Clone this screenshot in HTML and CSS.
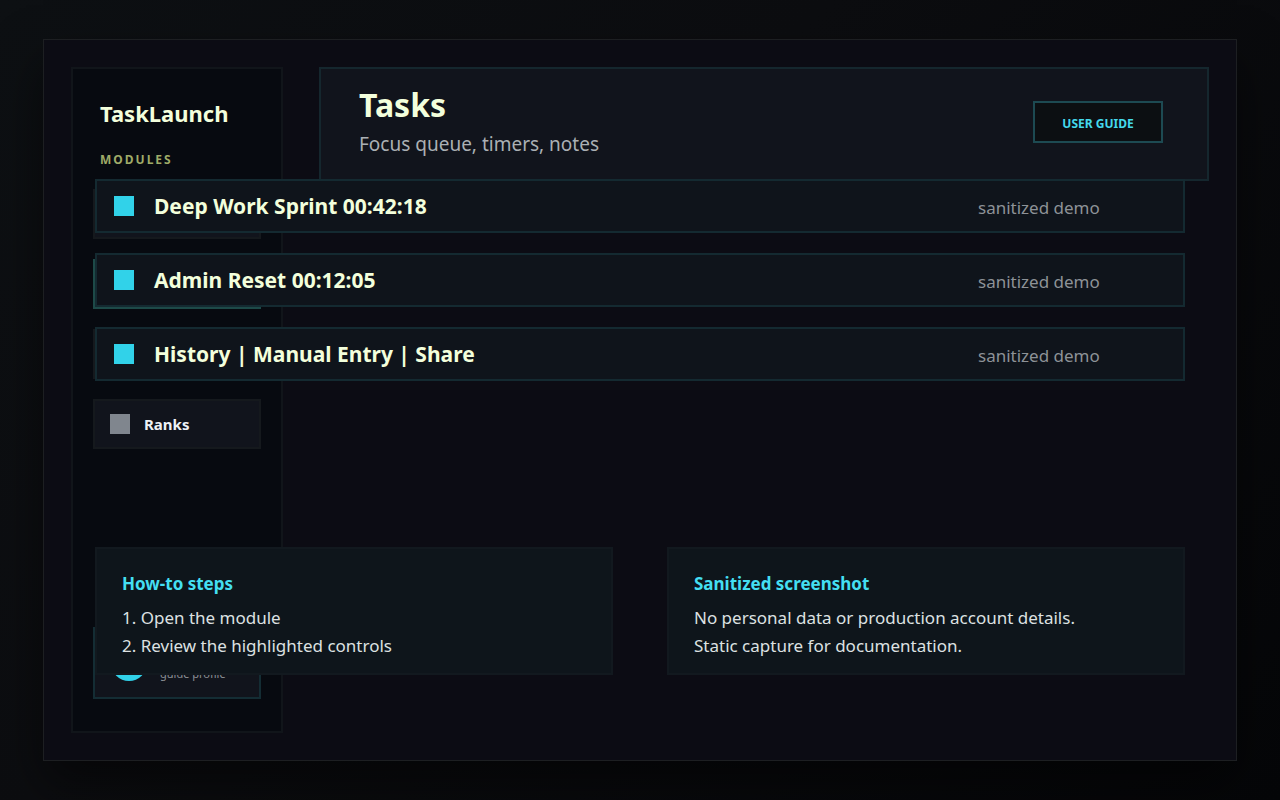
FILE: index.html
```html
<!DOCTYPE html>
<html lang="en">
<head>
    <meta charset="UTF-8">
    <meta name="viewport" content="width=device-width, initial-scale=1.0">
    <title>TaskLaunch - Tasks</title>
    <link rel="stylesheet" href="styles.css">
</head>
<body>
    <div class="shell">
        <aside class="sidebar">
            <div class="brand">TaskLaunch</div>
            <div class="nav-label">MODULES</div>
            <nav class="nav">
                <div class="nav-item"></div>
                <div class="nav-item active"></div>
                <div class="nav-item"></div>
                <a class="nav-item" href="#ranks"><span class="nav-icon"></span>Ranks</a>
            </nav>
            <div class="profile">
                <span class="avatar"></span>
                <span class="profile-text">guide profile</span>
            </div>
        </aside>

        <main class="content">
            <header class="page-header">
                <div>
                    <h1>Tasks</h1>
                    <p class="subtitle">Focus queue, timers, notes</p>
                </div>
                <button type="button" class="guide-button">USER GUIDE</button>
            </header>

            <section class="queue">
                <div class="task">
                    <span class="task-icon"></span>
                    <h2>Deep Work Sprint 00:42:18</h2>
                    <span class="task-note">sanitized demo</span>
                </div>
                <div class="task">
                    <span class="task-icon"></span>
                    <h2>Admin Reset 00:12:05</h2>
                    <span class="task-note">sanitized demo</span>
                </div>
                <div class="task">
                    <span class="task-icon"></span>
                    <h2>History | Manual Entry | Share</h2>
                    <span class="task-note">sanitized demo</span>
                </div>
            </section>

            <section class="cards">
                <div class="card">
                    <h3>How-to steps</h3>
                    <p>1. Open the module</p>
                    <p>2. Review the highlighted controls</p>
                </div>
                <div class="card">
                    <h3>Sanitized screenshot</h3>
                    <p>No personal data or production account details.</p>
                    <p>Static capture for documentation.</p>
                </div>
            </section>
        </main>
    </div>
</body>
</html>
```
FILE: styles.css
```css
* {
    box-sizing: border-box;
}
body {
    display: flex;
    min-height: 100vh;
    margin: 0;
    padding: 39px 43px;
    background: linear-gradient(135deg, #0d1013 0%, #0c0d10 40%, #050608 100%);
    color: #dde1e2;
    font-family: "Segoe UI", "Noto Sans", "Open Sans", sans-serif;
}
h1, h2, h3, p {
    margin: 0;
}

/* sidebar and content share one grid row, content lies on top */
.shell {
    flex: 1;
    display: grid;
    grid-template-columns: 212px 1fr;
    padding: 27px;
    background: #0c0c14;
    border: 1px solid #1d1f22;
    box-shadow: 0 24px 48px rgba(0, 0, 0, 0.5);
}
.sidebar {
    grid-column: 1;
    grid-row: 1;
    display: flex;
    flex-direction: column;
    padding: 28px 20px 32px;
    background: #070a10;
    border: 2px solid #11151a;
}
.content {
    grid-column: 1 / -1;
    grid-row: 1;
    display: flex;
    flex-direction: column;
    padding-bottom: 58px;
}

.brand {
    padding-left: 7px;
    color: #f3ffdc;
    font-size: 22px;
    font-weight: 700;
    line-height: 32px;
}
.nav-label {
    margin-top: 20px;
    padding-left: 7px;
    color: #9fab68;
    font-size: 12px;
    font-weight: 700;
    letter-spacing: 2px;
    line-height: 22px;
}
.nav {
    display: flex;
    flex-direction: column;
    gap: 20px;
    margin-top: 18px;
}
.nav-item {
    display: flex;
    align-items: center;
    gap: 14px;
    height: 50px;
    padding: 0 15px;
    background: #11141c;
    border: 2px solid #15191d;
    color: #eef2f6;
    font-size: 15px;
    font-weight: 700;
    text-decoration: none;
}
.nav-item.active {
    border-color: #1d4a48;
}
.nav-icon {
    width: 20px;
    height: 20px;
    background: #80868e;
}
.profile {
    display: flex;
    align-items: center;
    gap: 13px;
    height: 72px;
    margin-top: auto;
    padding: 0 16px;
    background: #11141c;
    border: 2px solid #142d34;
}
.avatar {
    width: 36px;
    height: 36px;
    border-radius: 50%;
    background: #31d2e9;
}
.profile-text {
    padding-top: 22px;
    color: #8b9095;
    font-size: 11px;
    line-height: 16px;
}

.page-header {
    display: flex;
    align-items: center;
    justify-content: space-between;
    height: 114px;
    margin-left: 248px;
    padding: 0 44px 4px 38px;
    background: #11141c;
    border: 2px solid #15272e;
}
h1 {
    color: #f3ffdc;
    font-size: 32px;
    font-weight: 700;
    line-height: 44px;
}
.subtitle {
    color: #abb0b4;
    font-size: 19px;
    line-height: 34px;
}
.guide-button {
    width: 130px;
    height: 42px;
    padding: 2px 0 0;
    background: #0c0f12;
    border: 2px solid #1d4a52;
    color: #44d9ec;
    font-family: inherit;
    font-size: 12px;
    font-weight: 700;
}

.queue {
    display: flex;
    flex-direction: column;
    gap: 20px;
    margin: -2px 24px 0;
}
.task {
    display: grid;
    grid-template-columns: 20px 1fr 205px;
    column-gap: 20px;
    align-items: center;
    height: 54px;
    padding-left: 17px;
    background: #0f141b;
    border: 2px solid #142a31;
}
.task-icon {
    width: 20px;
    height: 20px;
    background: #31d2e9;
}
.task h2 {
    color: #f3ffdc;
    font-size: 21px;
    font-weight: 700;
    line-height: 32px;
}
.task-note {
    padding-top: 4px;
    color: #8d9297;
    font-size: 17px;
    line-height: 24px;
}

.cards {
    display: grid;
    grid-template-columns: 1fr 1fr;
    gap: 54px;
    margin: auto 24px 0;
}
.card {
    padding: 19px 25px 13px;
    background: #0e151b;
    border: 2px solid #12191f;
}
.card h3 {
    margin-bottom: 4px;
    color: #44dff2;
    font-size: 17px;
    font-weight: 700;
    line-height: 32px;
}
.card p {
    font-size: 17px;
    line-height: 28px;
}
```
